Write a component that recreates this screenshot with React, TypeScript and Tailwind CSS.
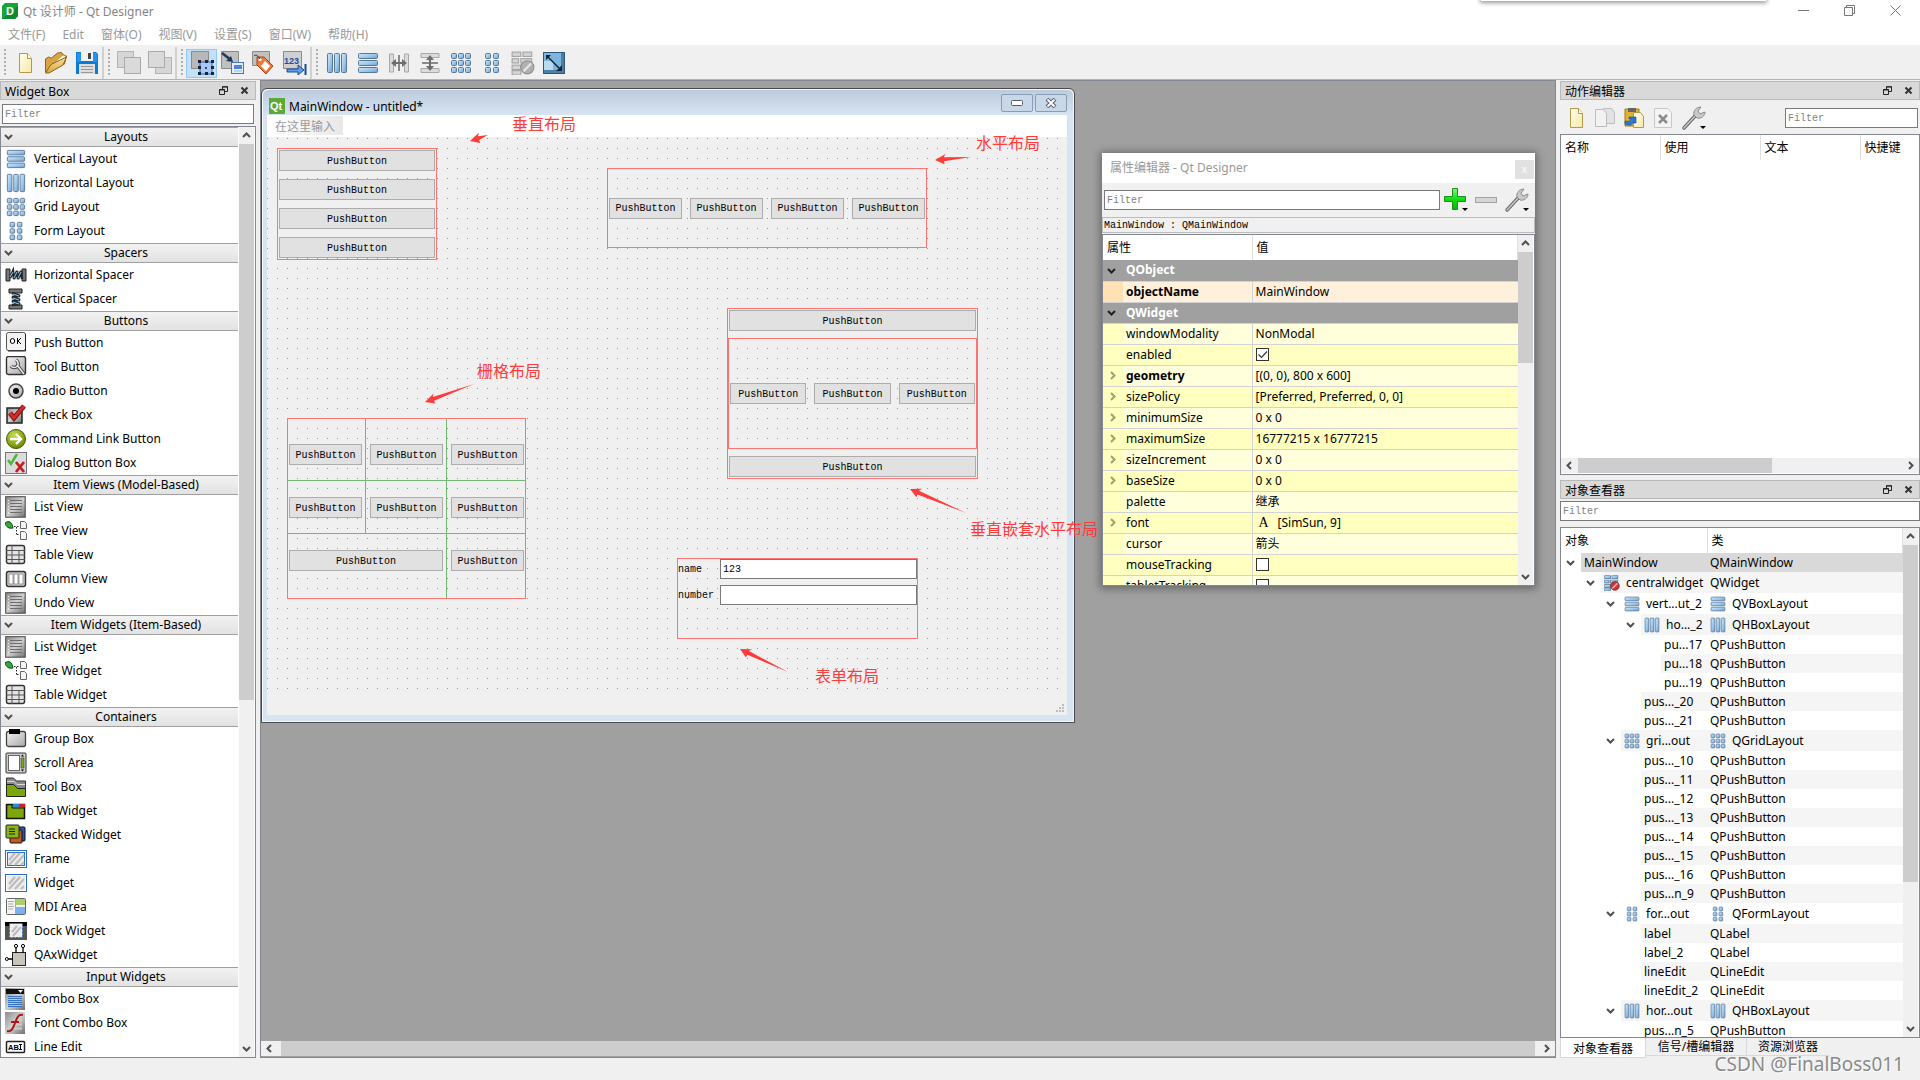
import React from "react";

type IconProps = { size?: number; muted?: boolean };

const ui = "font-['Noto_Sans','Noto_Sans_CJK_SC',sans-serif]";
const mono = "font-['Liberation_Mono','Noto_Sans_CJK_SC',monospace]";

/* ---------- shared gradients ---------- */
function Defs() {
  return (
    <svg className="absolute h-0 w-0" aria-hidden="true">
      <defs>
        <linearGradient id="blue" x1="0" y1="0" x2="1" y2="1">
          <stop offset="0" stopColor="#cfe8fb" />
          <stop offset="0.6" stopColor="#94c4ec" />
          <stop offset="1" stopColor="#7399bf" />
        </linearGradient>
        <linearGradient id="gray" x1="0" y1="0" x2="1" y2="1">
          <stop offset="0" stopColor="#f4f4f4" />
          <stop offset="1" stopColor="#a8a8a8" />
        </linearGradient>
        <linearGradient id="dark" x1="0" y1="0" x2="1" y2="1">
          <stop offset="0" stopColor="#8c8c8c" />
          <stop offset="0.5" stopColor="#d0d0d0" />
          <stop offset="1" stopColor="#6e6e6e" />
        </linearGradient>
        <linearGradient id="paper" x1="0" y1="0" x2="1" y2="1">
          <stop offset="0" stopColor="#fffdf0" />
          <stop offset="1" stopColor="#f7e9a4" />
        </linearGradient>
        <linearGradient id="folder" x1="0" y1="0" x2="0" y2="1">
          <stop offset="0" stopColor="#fbe49a" />
          <stop offset="1" stopColor="#dba63a" />
        </linearGradient>
        <linearGradient id="green" x1="0" y1="0" x2="0" y2="1">
          <stop offset="0" stopColor="#8bf08b" />
          <stop offset="0.5" stopColor="#10e010" />
          <stop offset="1" stopColor="#08b808" />
        </linearGradient>
        <radialGradient id="olive" cx="0.4" cy="0.3" r="0.7">
          <stop offset="0" stopColor="#c6dc4c" />
          <stop offset="1" stopColor="#6f8c00" />
        </radialGradient>
      </defs>
    </svg>
  );
}

function Svg({ size = 22, children, box = 22 }: { size?: number; box?: number; children: React.ReactNode }) {
  return (
    <svg width={size} height={size} viewBox={`0 0 ${box} ${box}`} className="shrink-0" aria-hidden="true">
      {children}
    </svg>
  );
}

/* ---------- layout icons ---------- */
type Cell = [number, number, number, number];
function Cells({ cells, size, muted }: IconProps & { cells: Cell[] }) {
  return (
    <Svg size={size}>
      {cells.map(([x, y, w, h], i) => (
        <rect key={i} x={x} y={y} width={w} height={h} rx="1" fill={muted ? "#dcdcdc" : "url(#blue)"} stroke={muted ? "#a4a4a4" : "#5b7796"} />
      ))}
    </Svg>
  );
}
const vCells: Cell[] = [[1.5, 1.5, 19, 5], [1.5, 8.5, 19, 5], [1.5, 15.5, 19, 5]];
const hCells: Cell[] = [[1.5, 1.5, 5, 19], [8.5, 1.5, 5, 19], [15.5, 1.5, 5, 19]];
const gCells: Cell[] = [1.5, 8.5, 15.5].flatMap((y) => [1.5, 8.5, 15.5].map((x) => [x, y, 5, 5] as Cell));
const fCells: Cell[] = [1.5, 8.5, 15.5].flatMap((y) => [4.5, 12.5].map((x) => [x, y, 5, 5] as Cell));
const VIcon = (p: IconProps) => <Cells cells={vCells} {...p} />;
const HIcon = (p: IconProps) => <Cells cells={hCells} {...p} />;
const GIcon = (p: IconProps) => <Cells cells={gCells} {...p} />;
const FIcon = (p: IconProps) => <Cells cells={fCells} {...p} />;

function BreakIcon({ size = 22, muted }: IconProps) {
  const f = muted ? "#d4d4d4" : "url(#blue)";
  const s = muted ? "#a4a4a4" : "#5b7796";
  return (
    <Svg size={size}>
      {[[1, 1, 8], [11, 1, 8], [1, 7, 6], [9, 7, 10], [1, 13, 8], [1, 18, 8]].map(([x, y, w], i) => (
        <rect key={i} x={x} y={y} width={w} height="4" fill={f} stroke={s} />
      ))}
      <circle cx="15" cy="15" r="6" fill={muted ? "#b0b0b0" : "#c9363a"} stroke={muted ? "#929292" : "#8c1f25"} />
      <path d="M11.5 18.5l7-7" stroke={muted ? "#e8e8e8" : "#eab8b8"} strokeWidth="2" />
    </Svg>
  );
}

/* ---------- toolbar icons ---------- */
const NewIcon = ({ size = 24, muted }: IconProps) => (
  <Svg size={size} box={24}>
    <path d="M6.500 2.500h8l4 5v14h-12z" fill={muted ? "#eee" : "url(#paper)"} stroke={muted ? "#c4c4c4" : "#b39a4a"} />
    <path d="M14.500 2.500v5h4" fill="#fff" stroke={muted ? "#c4c4c4" : "#b39a4a"} />
  </Svg>
);
const OpenIcon = () => (
  <Svg size={24} box={24}>
    <path d="M1.500 21V8l3-2 3 1 6-5 4-.5 2 2.500 3 1-2 8z" fill="#d9a441" stroke="#8a6420" />
    <path d="M6 15L19 4l3 1-5 8z" fill="#fff8dd" stroke="#a9853a" strokeWidth=".7" />
    <path d="M1.500 22L7 13.500 22.500 6 19 14 5 22z" fill="url(#folder)" stroke="#8a6420" />
  </Svg>
);
const SaveIcon = () => (
  <Svg size={24} box={24}>
    <path d="M1 1h20l2 2v20H1z" fill="#0d7bd6" />
    <path d="M2 2h4v9H2zM18 2h3l1 2v7h-4z" fill="#2495ee" />
    <path d="M6 1h12v9H6z" fill="#f2f2f2" /><path d="M13 2h3v6h-3z" fill="#444" />
    <path d="M4 13h16v10H4z" fill="#ddd" />
    <path d="M6 15.500h12M6 18.500h12M6 21.500h12" stroke="#9a9a9a" />
  </Svg>
);
const BackIcon = ({ front }: { front?: boolean }) => (
  <Svg size={24} box={24}>
    <rect x={front ? 7.5 : 0.5} y={front ? 6.5 : 0.5} width="16" height="16" fill="#d6d6d6" stroke="#b4b4b4" />
    <rect x={front ? 0.5 : 7.5} y={front ? 0.5 : 6.5} width="16" height="16" fill="#dadada" stroke="#aaa" />
  </Svg>
);
const WidgetsIcon = () => (
  <Svg size={26} box={26}>
    <rect x="2.500" y="1.500" width="17" height="17" fill="#b8b8b8" stroke="#8b8b8b" />
    <rect x="11" y="12" width="12" height="12" fill="#a9c8f5" stroke="#3d5f96" />
    {[[9, 10], [16, 10], [22, 10], [9, 16], [22, 16], [9, 22], [16, 22], [22, 22]].map(([x, y]) => (
      <rect key={`${x}-${y}`} x={x} y={y} width="3" height="3" fill="#15243c" />
    ))}
    <rect x="16" y="17" width="2" height="2" fill="#234a8a" />
  </Svg>
);
const SignalsIcon = () => (
  <Svg size={26} box={26}>
    <path d="M1.500 1.500h17v17h-17z" fill="#c0c0c0" stroke="#8b8b8b" />
    <path d="M2 3l9 7" stroke="#1b3a5c" strokeWidth="2.500" /><path d="M13 12l-7-1 5-5z" fill="#1b3a5c" />
    <rect x="11.500" y="12.500" width="12" height="11" fill="#e3ecfa" stroke="#4d77b4" />
    <rect x="14" y="15" width="8" height="4" fill="#4d86d8" /><path d="M14 21h8" stroke="#9cb6dc" />
  </Svg>
);
const BuddiesIcon = () => (
  <Svg size={26} box={26}>
    <path d="M1.500 1.500h17v14h-17z" fill="#c0c0c0" stroke="#8b8b8b" />
    <path d="M6 7h7l9 9-7 8-9-9z" fill="#f07a3c" stroke="#a8441c" />
    <path d="M14 11l5 5-4 5-5-5z" fill="#fff" />
    <circle cx="9" cy="9.500" r="1.500" fill="#fff" /><path d="M3 6c2-2 4 0 6 3" stroke="#333" fill="none" />
  </Svg>
);
const TabOrderIcon = () => (
  <Svg size={26} box={26}>
    <path d="M1.500 1.500h18v17h-18z" fill="#d0d0d0" stroke="#8b8b8b" />
    <text x="2" y="14" fontSize="9" fontWeight="700" fill="#17509a" fontFamily="Liberation Sans, sans-serif">123</text>
    <path d="M5 19h11v-4l6 5-6 5v-3H5z" fill="#5b9cf0" stroke="#1c4c90" /><path d="M23.500 14v11" stroke="#1c4c90" strokeWidth="2" />
  </Svg>
);
const HSplitIcon = () => (
  <Svg>
    <path d="M1.500 2h4v18h-4zM16.500 2h4v18h-4z" fill="#dcdcdc" stroke="#a8a8a8" />
    <path d="M11 3v16" stroke="#8a8a8a" strokeWidth="2" /><path d="M3 11l5-4v3h6V7l5 4-5 4v-3H8v3z" fill="#6e6e6e" />
  </Svg>
);
const VSplitIcon = () => (
  <Svg>
    <path d="M2 1.500h18v4H2zM2 16.500h18v4H2z" fill="#dcdcdc" stroke="#a8a8a8" />
    <path d="M3 11h16" stroke="#8a8a8a" strokeWidth="2" /><path d="M11 3l4 5h-3v6h3l-4 5-4-5h3V8H7z" fill="#6e6e6e" />
  </Svg>
);
const AdjustIcon = () => (
  <Svg size={24} box={24}>
    <path d="M1 1h22v22H1z" fill="#4c7ea6" /><path d="M2 2h17v17H2z" fill="#7eb5dc" /><path d="M2 10h9v9H2z" fill="#b8dbf2" />
    <path d="M1.500 1.500h21v21h-21z" fill="none" stroke="#2f5878" />
    <path d="M6 6l11 11" stroke="#0e2536" strokeWidth="1.500" /><path d="M4 4h5l-5 5zM20 20h-6l6-6z" fill="#0e2536" />
  </Svg>
);
const WrenchIcon = () => (
  <Svg size={26} box={26}>
    <path d="M3 23l12-13" stroke="#666" strokeWidth="3.500" strokeLinecap="round" />
    <path d="M3 23l12-13" stroke="#c9c9c9" strokeWidth="1.500" strokeLinecap="round" />
    <path d="M13 10c-1-4 2-8 7-8l-3 4 2 3 5-2c0 4-4 7-8 6z" fill="#c9c9c9" stroke="#8c8c8c" />
    <path d="M19 21h6l-3 3z" fill="#000" />
  </Svg>
);
const PlusIcon = () => (
  <Svg size={26} box={26}>
    <path d="M9.500 1.500h5v8h8v5h-8v8h-5v-8h-8v-5h8z" fill="url(#green)" stroke="#189018" />
    <path d="M19 21h6l-3 3z" fill="#000" />
  </Svg>
);
const MinusIcon = () => (
  <Svg size={24} box={24}><rect x="1.500" y="9.500" width="21" height="5" fill="#d6d6d6" stroke="#a2a2a2" /></Svg>
);
const CopyIcon = () => (
  <Svg size={22} box={22}>
    <path d="M9.500 1.500h8l3 4v11h-11z" fill="#e2e2e2" stroke="#bdbdbd" /><path d="M1.500 2.500h8l3 4v13h-11z" fill="#f2f2f2" stroke="#bdbdbd" />
  </Svg>
);
const PasteIcon = () => (
  <Svg size={22} box={22}>
    <path d="M2 2h14v17H2z" fill="#e2b32e" stroke="#a27a10" /><path d="M5 1h8v4H5z" fill="#666" />
    <path d="M10.500 5.500h7l3 4v11h-10z" fill="url(#paper)" stroke="#b39a4a" /><path d="M2 14c5 1 6-1 6-2H6l0-2h7v6h-2v-1c-2 3-5 4-9 2z" fill="#2a78dc" stroke="#124a9c" strokeWidth=".6" />
  </Svg>
);
const DeleteIcon = () => (
  <Svg size={22} box={22}>
    <path d="M2.500 1.500h13l4 4v15h-17z" fill="#f4f4f4" stroke="#c8c8c8" /><path d="M7 8l8 8M15 8l-8 8" stroke="#8c8c8c" strokeWidth="2.500" />
  </Svg>
);

/* ---------- widget box icons ---------- */
const HSpacer = () => (
  <Svg><path d="M1 5h4v12H1zM17 5h4v12h-4z" fill="#777" stroke="#222" /><path d="M5 14l3-7 1 8 3-8 1 8 3-8 1 8" stroke="#1c2a36" strokeWidth="2.500" fill="none" /><path d="M5 13l3-5M9 14l3-6M13 14l3-6" stroke="#9cc4dc" /></Svg>
);
const VSpacer = () => (
  <Svg><path d="M4 1h13v4H4zM4 17h13v4H4z" fill="#777" stroke="#222" /><path d="M7 5l8 3-8 1 8 3-8 1 8 3-8 1" stroke="#1c2a36" strokeWidth="2.500" fill="none" /><path d="M8 6l6 2M8 10l6 2M8 14l6 2" stroke="#9cc4dc" /></Svg>
);
const PushIcon = () => (
  <Svg><rect x="1.500" y=".5" width="19" height="18" rx="2" fill="#f2f2f2" stroke="#555" /><path d="M20.500 2v17H3" stroke="#222" fill="none" /><ellipse cx="7.500" cy="9" rx="2.200" ry="2.500" fill="none" stroke="#000" /><path d="M12.500 6v6M16 6l-3 3 3 3" stroke="#000" fill="none" /></Svg>
);
const ToolIcon = () => (
  <Svg><rect x="1.500" y=".5" width="19" height="18" rx="2" fill="url(#gray)" stroke="#333" strokeWidth="1.400" /><path d="M11 4a4 4 0 1 1-5 6M12 9l7 9" stroke="#444" strokeWidth="3.500" fill="none" /><path d="M11 4a4 4 0 1 1-5 6M12 9l7 9" stroke="#eee" strokeWidth="1.500" fill="none" /></Svg>
);
const RadioIcon = () => (
  <Svg><circle cx="11" cy="11" r="7" fill="url(#gray)" stroke="#444" strokeWidth="1.500" /><circle cx="11" cy="11" r="3" fill="#000" /></Svg>
);
const CheckIcon = () => (
  <Svg><path d="M2 4h15v15H2z" fill="url(#dark)" stroke="#222" strokeWidth="1.500" /><path d="M5 9l4 5L19 2" stroke="#7a1212" strokeWidth="5" fill="none" /><path d="M5 9l4 5L19 2" stroke="#d42a2a" strokeWidth="3" fill="none" /></Svg>
);
const LinkIcon = () => (
  <Svg><circle cx="11" cy="11" r="9.500" fill="url(#olive)" stroke="#44560a" /><path d="M5 11h10M11 6l5 5-5 5" stroke="#fff" strokeWidth="2.400" fill="none" /></Svg>
);
const DialogIcon = () => (
  <Svg><rect x=".5" y=".5" width="21" height="21" fill="#dcdcdc" stroke="#777" /><path d="M3 8l3 4 6-10" stroke="#4eb83c" strokeWidth="2.500" fill="none" /><path d="M11 10l8 10M19 10l-8 10" stroke="#c22020" strokeWidth="2.800" /></Svg>
);
const ListIcon = () => (
  <Svg><rect x=".7" y=".7" width="19.500" height="20.500" fill="url(#dark)" stroke="#444" /><path d="M5 4.500h12M5 7.500h12M5 10.500h12M5 13.500h12M5 16.500h12" stroke="#6e6e6e" /><path d="M3 4.500h1M3 7.500h1M3 10.500h1M3 13.500h1M3 16.500h1" stroke="#eee" /></Svg>
);
const TreeIcon = () => (
  <Svg><path d="M0 3c4-3 7-1 8 5-4 1-7-1-8-5z" fill="#35a83a" stroke="#0b4c12" /><path d="M9 6.500h6M11.500 7v8M12 14.500h4" stroke="#222" strokeDasharray="1.500 1.500" /><path d="M15.500 1.500h4l2 2v5h-6zM15.500 11.500h4l2 2v6h-6z" fill="#f4f4f4" stroke="#666" /></Svg>
);
const TableIcon = () => (
  <Svg><rect x="1.500" y="1.500" width="18" height="18" rx="2" fill="#e4e4e4" stroke="#333" strokeWidth="1.500" /><path d="M1 6.500h19M1 11h19M1 15.500h19M7 1v19M14 6v13" stroke="#555" /></Svg>
);
const ColumnIcon = () => (
  <Svg><rect x="1.500" y="3.500" width="19" height="15" rx="2" fill="#ccc" stroke="#333" strokeWidth="1.500" /><path d="M4 6h4v10H4zM9 6h4v10H9zM14 6h4v10h-4z" fill="#fff" stroke="#777" strokeWidth=".7" /></Svg>
);
const GroupIcon = () => (
  <Svg><rect x="1.500" y="3.500" width="19" height="15" rx="2" fill="url(#gray)" stroke="#444" strokeWidth="1.300" /><path d="M4 1h11v5H4z" fill="#000" /></Svg>
);
const ScrollIcon = () => (
  <Svg><rect x="1" y="1" width="20" height="20" rx="1" fill="#ccc" stroke="#333" /><rect x="3.500" y="3.500" width="11" height="15" fill="#fff" stroke="#666" /><path d="M16 6h3v10h-3z" fill="#7ba808" stroke="#345" strokeWidth=".6" /><path d="M16 4.500l1.500-2 1.500 2zM16 17.500l1.500 2 1.500-2z" fill="#000" /></Svg>
);
const ToolBoxIcon = () => (
  <Svg><path d="M1.500 2h7l3 3h9v8h-8l-4-4h-7z" fill="#8a8a8a" stroke="#333" /><path d="M2 5.500h7l3 3h8" stroke="#ddd" fill="none" /><path d="M1.500 8.500h7l4 4h8v8h-19z" fill="#7ba808" stroke="#222" /></Svg>
);
const TabIcon = () => (
  <Svg><path d="M1.500 4.500h18v14h-18z" fill="#7ba808" stroke="#111" strokeWidth="1.500" /><path d="M8 4h6v3H8z" fill="#2a8ae0" /><path d="M14 4h6v3h-6z" fill="#d42020" /><path d="M7 4v4h13" stroke="#111" fill="none" /></Svg>
);
const StackIcon = () => (
  <Svg><rect x="9" y="3" width="11" height="14" rx="1" fill="#2456b0" stroke="#111" /><rect x="5" y="6" width="12" height="13" rx="1" fill="#c85a1c" stroke="#111" /><rect x="1" y="1" width="13" height="13" rx="1" fill="#8cb414" stroke="#223" /><path d="M4 5h6M4 7.500h6M4 10h6" stroke="#123" /></Svg>
);
const FrameIcon = ({ inner }: { inner?: boolean }) => (
  <Svg>
    <rect x=".5" y="2.500" width="21" height="17" fill="#fff" stroke="#2a6cc4" />
    <rect x="2.500" y="4.500" width="17" height="13" fill="#ececec" stroke={inner ? "#2a6cc4" : "#ececec"} />
    <path d="M4 12l6-7M4 17L15 5M10 17l9-10M16 17l3-3" stroke="#bbb" strokeWidth="2" />
  </Svg>
);
const MdiIcon = () => (
  <Svg><rect x="1.500" y="2.500" width="19" height="16" rx="1" fill="#f4f4f4" stroke="#666" /><path d="M11 3h9v6h-9z" fill="#a9d06a" /><path d="M11 11h9v7h-9z" fill="#7db0ee" /><path d="M3 5.500h6M3 8h5M3 10.500h6M3 13h5M10.500 3v15M11 13.500h9M14.500 11v7" stroke="#aaa" /></Svg>
);
const DockIcon = () => (
  <Svg><path d="M0 2h22v18H0z" fill="#555" /><path d="M0 2h22v4H0z" fill="#000" /><rect x="4.500" y="3.500" width="13" height="14" fill="#eee" stroke="#2a6cc4" strokeDasharray="2 1.500" /><path d="M7 12l5-6M8 16l8-9" stroke="#bbb" strokeWidth="2" /></Svg>
);
const AxIcon = () => (
  <Svg><rect x="7.500" y="8.500" width="13" height="13" fill="#c8c4bc" stroke="#222" /><path d="M11 3v6M18 3v6M3 15h5" stroke="#000" strokeWidth="1.300" /><circle cx="11" cy="2" r="1.600" fill="#fff" stroke="#000" /><circle cx="18" cy="2" r="1.600" fill="#fff" stroke="#000" /><circle cx="1.800" cy="15" r="1.500" fill="#fff" stroke="#000" /></Svg>
);
const ComboIcon = () => (
  <Svg><path d="M0 0h20v22H0z" fill="url(#dark)" /><path d="M1 1h18v5H1z" fill="#111" /><path d="M13 2h5l-2.500 3z" fill="#fff" /><path d="M3 9.500h14M3 13.500h14M3 17.500h14" stroke="#3a76c0" strokeWidth="3" /><path d="M3 9.500h14M3 13.500h14M3 17.500h14" stroke="#8fc0f2" /></Svg>
);
const FontComboIcon = () => (
  <Svg><path d="M0 0h20v22H0z" fill="url(#dark)" /><path d="M9 8.500h8M9 12.500h8M9 16.500h8" stroke="#ccc" strokeWidth="2" /><path d="M18 3c-5-1-6 3-8 8s-3 9-8 8M6 10h8" stroke="#b01414" strokeWidth="2" fill="none" /></Svg>
);
const LineEditIcon = () => (
  <Svg><rect x="1.500" y="5.500" width="18" height="11" rx="1" fill="#fff" stroke="#222" strokeWidth="1.500" /><text x="3" y="14" fontSize="7.500" fontWeight="700" fontFamily="Liberation Sans, sans-serif">AB</text><path d="M14 8.500h3M15.500 8.500v5M14 13.500h3" stroke="#000" /></Svg>
);

/* ---------- small controls ---------- */
const chevronPaths = { up: "M2 7l3.500-3.500L9 7", down: "M2 4l3.500 3.500L9 4", left: "M7 2L3.500 5.500 7 9", right: "M4 2l3.500 3.500L4 9" };
function Chevron({ dir, color = "#505050" }: { dir: keyof typeof chevronPaths; color?: string }) {
  return (
    <svg width="11" height="11" viewBox="0 0 11 11" className="shrink-0" aria-hidden="true">
      <path d={chevronPaths[dir]} fill="none" stroke={color} strokeWidth="2" />
    </svg>
  );
}
function VScroll({ thumb }: { thumb: string }) {
  return (
    <div className="mr-px flex w-[15px] shrink-0 flex-col bg-[#f0f0f0]">
      <button aria-label="Scroll up" className="flex h-[17px] shrink-0 items-center justify-center"><Chevron dir="up" /></button>
      <div className="min-h-0 flex-1"><div className={`bg-[#cdcdcd] ${thumb}`} /></div>
      <button aria-label="Scroll down" className="flex h-[17px] shrink-0 items-center justify-center"><Chevron dir="down" /></button>
    </div>
  );
}
function HScroll({ thumb }: { thumb: string }) {
  return (
    <div className="mb-px flex h-[15px] shrink-0 bg-[#f0f0f0]">
      <button aria-label="Scroll left" className="flex w-[17px] shrink-0 items-center justify-center"><Chevron dir="left" /></button>
      <div className="flex min-w-0 flex-1"><div className={`bg-[#cdcdcd] ${thumb}`} /></div>
      <button aria-label="Scroll right" className="flex w-[17px] shrink-0 items-center justify-center"><Chevron dir="right" /></button>
    </div>
  );
}
function DockTitle({ title }: { title: string }) {
  return (
    <div className="flex h-[19px] shrink-0 items-center border border-[#b9b9b9] bg-[#d9d9d9] pl-1">
      <h2 className="flex-1 whitespace-nowrap pt-[2px]">{title}</h2>
      <button aria-label="Float" className="flex w-[21px] justify-center">
        <svg width="9" height="9" viewBox="0 0 9 9"><path d="M3.500 3V.7h5v4.800H6M.5 3.500h5v5h-5zM3 1h6M0 4h6" fill="none" stroke="#222" /></svg>
      </button>
      <button aria-label="Close" className="flex w-[21px] justify-center">
        <svg width="9" height="9" viewBox="0 0 9 9"><path d="M1.500 1.500l6 6M7.500 1.500l-6 6" stroke="#333" strokeWidth="2" /></svg>
      </button>
    </div>
  );
}
function Filter({ className = "" }: { className?: string }) {
  return (
    <input aria-label="Filter" placeholder="Filter" className={`h-5 min-w-0 shrink-0 border border-[#7a7a7a] bg-white px-[2px] text-[10px] placeholder:text-[#7f7f7f] ${mono} ${className}`} />
  );
}

/* ---------- widget box ---------- */
type WidgetItem = [string, () => React.ReactElement];
const categories: { name: string; items: WidgetItem[] }[] = [
  { name: "Layouts", items: [["Vertical Layout", () => <VIcon size={20} />], ["Horizontal Layout", () => <HIcon size={20} />], ["Grid Layout", () => <GIcon size={20} />], ["Form Layout", () => <FIcon size={20} />]] },
  { name: "Spacers", items: [["Horizontal Spacer", HSpacer], ["Vertical Spacer", VSpacer]] },
  { name: "Buttons", items: [["Push Button", PushIcon], ["Tool Button", ToolIcon], ["Radio Button", RadioIcon], ["Check Box", CheckIcon], ["Command Link Button", LinkIcon], ["Dialog Button Box", DialogIcon]] },
  { name: "Item Views (Model-Based)", items: [["List View", ListIcon], ["Tree View", TreeIcon], ["Table View", TableIcon], ["Column View", ColumnIcon], ["Undo View", ListIcon]] },
  { name: "Item Widgets (Item-Based)", items: [["List Widget", ListIcon], ["Tree Widget", TreeIcon], ["Table Widget", TableIcon]] },
  { name: "Containers", items: [["Group Box", GroupIcon], ["Scroll Area", ScrollIcon], ["Tool Box", ToolBoxIcon], ["Tab Widget", TabIcon], ["Stacked Widget", StackIcon], ["Frame", () => <FrameIcon inner />], ["Widget", () => <FrameIcon />], ["MDI Area", MdiIcon], ["Dock Widget", DockIcon], ["QAxWidget", AxIcon]] },
  { name: "Input Widgets", items: [["Combo Box", ComboIcon], ["Font Combo Box", FontComboIcon], ["Line Edit", LineEditIcon]] },
];

function WidgetBox() {
  return (
    <aside className="mr-1 flex w-64 shrink-0 flex-col pt-px">
      <DockTitle title="Widget Box" />
      <Filter className="mx-[2px] mt-1" />
      <div className="mt-[2px] flex min-h-0 flex-1 border border-[#828790] bg-white">
        <div className="min-w-0 flex-1 overflow-hidden">
          {categories.map((c) => (
            <section key={c.name}>
              <h3 className="mr-px flex h-5 items-center border-b border-t border-[#a0a0a0] bg-linear-to-b from-[#f2f2f2] to-[#e2e2e2] pl-[2px]">
                <span className="pb-[2px]"><Chevron dir="down" /></span>
                <span className="flex-1 text-center">{c.name}</span>
              </h3>
              <ul>
                {c.items.map(([label, Icon]) => (
                  <li key={label} className="flex h-6 items-center gap-2 pl-[5px]">
                    <span className="flex w-5 justify-center pb-px"><Icon /></span>
                    <span>{label}</span>
                  </li>
                ))}
              </ul>
            </section>
          ))}
        </div>
        <VScroll thumb="h-[62%]" />
      </div>
    </aside>
  );
}

/* ---------- form canvas ---------- */
function Push({ className = "" }: { className?: string }) {
  return <button className={`h-[21px] border border-[#adadad] bg-[#e1e1e1] pt-[2px] text-[10px] leading-none ${className}`}>PushButton</button>;
}

function FormWindow() {
  return (
    <section className="absolute left-0 top-[7px] flex w-[814px] flex-col rounded-t-md border border-[#4a4a4a] bg-[#d7e4f2] pb-[7px] pl-[5px] pr-[7px] shadow-[inset_0_0_0_1px_#f4f8fc]">
      <header className="-ml-1 -mr-[6px] mt-px flex h-[25px] items-center rounded-t-md bg-linear-to-b from-[#bccbdb] to-[#d7e4f2] pl-[6px] pr-[6px]">
        <svg width="16" height="16" viewBox="0 0 16 16" className="mt-[7px]"><path d="M0 0h16v16H0z" fill="#5caa35" /><text x="1" y="12" fontSize="11" fontWeight="700" fill="#fff" fontFamily="Liberation Sans, sans-serif">Qt</text></svg>
        <h1 className="flex-1 pl-1 pt-2">MainWindow - untitled*</h1>
        <div className="flex gap-[2px]">
          <button aria-label="Minimize" className="flex h-[18px] w-8 items-center justify-center rounded-xs border border-[#8a9bb5] bg-[#c9d8e8]">
            <svg width="12" height="6" viewBox="0 0 12 6"><rect x=".5" y=".5" width="11" height="5" rx="1" fill="#fff" stroke="#555b6e" /></svg>
          </button>
          <button aria-label="Close form" className="flex h-[18px] w-8 items-center justify-center rounded-xs border border-[#8a9bb5] bg-[#c9d8e8]">
            <svg width="12" height="10" viewBox="0 0 12 10"><path d="M2 1l8 8M10 1L2 9" stroke="#555b6e" strokeWidth="4" /><path d="M2.500 1.500l7 7M9.500 1.500l-7 7" stroke="#fff" strokeWidth="2" /></svg>
          </button>
        </div>
      </header>
      <div className="h-[22px] bg-white pt-px">
        <button className="flex h-[19px] w-[76px] items-end justify-center bg-linear-to-r from-white to-[#e8e8e8] text-[#9a9a9a]">在这里输入</button>
      </div>
      <div className={`relative h-[578px] bg-[#f0f0f0] ${mono}`}>
        <div className="h-[555px] bg-[conic-gradient(from_270deg_at_1px_1px,#969696_90deg,transparent_0)] bg-[length:10px_10px] bg-[position:0_1px]" />

        <div className="absolute left-[10px] top-[11px] flex w-40 flex-col gap-2 border border-[#ff7373] p-px">
          <Push /><Push /><Push /><Push />
        </div>

        <div className="absolute left-[340px] top-[31px] flex h-20 w-80 items-center gap-2 border border-[#ff7373] px-px">
          <Push className="flex-1" /><Push className="flex-1" /><Push className="flex-1" /><Push className="flex-1" />
        </div>

        <div className="absolute left-[460px] top-[171px] flex h-[171px] w-[251px] flex-col gap-[7px] border border-[#ff7373] py-px">
          <Push className="mx-px" />
          <div className="flex flex-1 items-center gap-2 border border-[#ff7373] px-px">
            <Push className="flex-1" /><Push className="flex-1" /><Push className="flex-1" />
          </div>
          <Push className="mx-px" />
        </div>

        <div className="absolute left-5 top-[281px] grid h-[181px] w-[239px] grid-cols-[78px_81px_1fr] grid-rows-[62px_53px_1fr] border border-[#ff7373]">
          <div className="border-b border-r border-[#73b973] pl-px pt-[25px]"><Push className="w-[73px]" /></div>
          <div className="border-b border-r border-[#73b973] pl-1 pt-[25px]"><Push className="w-[73px]" /></div>
          <div className="border-b border-[#73b973] pl-1 pt-[25px]"><Push className="w-[73px]" /></div>
          <div className="border-b border-r border-[#73b973] pl-px pt-4"><Push className="w-[73px]" /></div>
          <div className="border-b border-r border-[#73b973] pl-1 pt-4"><Push className="w-[73px]" /></div>
          <div className="border-b border-[#73b973] pl-1 pt-4"><Push className="w-[73px]" /></div>
          <div className="col-span-2 border-r border-[#73b973] pl-px pt-4"><Push className="w-[154px]" /></div>
          <div className="pl-1 pt-4"><Push className="w-[73px]" /></div>
        </div>

        <div className="absolute left-[410px] top-[421px] grid h-[81px] w-[241px] grid-cols-[42px_197px] content-start items-center gap-y-[6px] border border-[#ff7373] text-[10px]">
          <label htmlFor="lineEdit" className="pt-[2px]">name</label>
          <input id="lineEdit" defaultValue="123" className="h-5 border border-[#7a7a7a] bg-white px-[2px]" />
          <label htmlFor="lineEdit_2" className="pt-[2px]">number</label>
          <input id="lineEdit_2" className="h-5 border border-[#7a7a7a] bg-white px-[2px]" />
        </div>

        <svg width="9" height="9" viewBox="0 0 9 9" className="absolute bottom-[2px] right-[3px]"><path d="M7 0h2v2H7zM4 3h2v2H4zM7 3h2v2H7zM1 6h2v2H1zM4 6h2v2H4zM7 6h2v2H7z" fill="#bdbdbd" /></svg>
      </div>
    </section>
  );
}

/* ---------- notes over the workspace ---------- */
const arrows: [number, number, number, number][] = [
  [209, 60, 227, 54],
  [674, 79, 710, 76],
  [164, 321, 213, 303],
  [649, 408, 705, 432],
  [479, 568, 527, 591],
];
function arrowPoints([tx, ty, sx, sy]: [number, number, number, number]) {
  const len = Math.hypot(tx - sx, ty - sy);
  const ux = (tx - sx) / len;
  const uy = (ty - sy) / len;
  const at = (back: number, side: number) => `${tx - ux * back - uy * side},${ty - uy * back + ux * side}`;
  return [`${sx},${sy}`, at(9, 2), at(11, 5), `${tx},${ty}`, at(9, -5), at(9, -2)].join(" ");
}
const note = "absolute whitespace-nowrap text-base leading-6 text-[#ff3c3c]";

function Notes() {
  return (
    <div className="pointer-events-none absolute inset-0">
      <svg className="absolute inset-0 h-full w-full" aria-hidden="true">
        {arrows.map((a) => <polygon key={a.join()} points={arrowPoints(a)} fill="#ff3c3c" />)}
      </svg>
      <span className={`${note} left-[251px] top-[31px]`}>垂直布局</span>
      <span className={`${note} left-[715px] top-[50px]`}>水平布局</span>
      <span className={`${note} left-[216px] top-[278px]`}>栅格布局</span>
      <span className={`${note} left-[709px] top-[436px]`}>垂直嵌套水平布局</span>
      <span className={`${note} left-[554px] top-[583px]`}>表单布局</span>
    </div>
  );
}

/* ---------- property editor ---------- */
type Prop = { name: string; value?: string; kind?: "group" | "check"; checked?: boolean; bold?: boolean; tree?: boolean; tone: string; edge: string; font?: boolean };
const light = { tone: "bg-[#ffffdc]", edge: "bg-[#ffffbf]" };
const deep = { tone: "bg-[#ffffbf]", edge: "bg-[#ffffbf]" };
const peach = { tone: "bg-[#fff0dc]", edge: "bg-[#ffe1b5]" };
const props: Prop[] = [
  { name: "QObject", kind: "group", ...light },
  { name: "objectName", value: "MainWindow", bold: true, ...peach },
  { name: "QWidget", kind: "group", ...light },
  { name: "windowModality", value: "NonModal", ...light },
  { name: "enabled", kind: "check", checked: true, ...deep },
  { name: "geometry", value: "[(0, 0), 800 x 600]", bold: true, tree: true, ...light },
  { name: "sizePolicy", value: "[Preferred, Preferred, 0, 0]", tree: true, ...deep },
  { name: "minimumSize", value: "0 x 0", tree: true, ...light },
  { name: "maximumSize", value: "16777215 x 16777215", tree: true, ...deep },
  { name: "sizeIncrement", value: "0 x 0", tree: true, ...light },
  { name: "baseSize", value: "0 x 0", tree: true, ...deep },
  { name: "palette", value: "继承", ...light },
  { name: "font", value: "[SimSun, 9]", tree: true, font: true, ...deep },
  { name: "cursor", value: "箭头", ...light },
  { name: "mouseTracking", kind: "check", ...deep },
  { name: "tabletTracking", kind: "check", ...light },
];

function PropertyEditor() {
  return (
    <section className="absolute left-[841px] top-[72px] flex h-[433px] w-[433px] flex-col bg-[#f0f0f0] shadow-[0_1px_8px_2px_rgba(0,0,0,0.35)]">
      <header className="flex h-[30px] shrink-0 items-center justify-between bg-white pl-2 pr-px">
        <h2 className="text-[#999]">属性编辑器 - Qt Designer</h2>
        <button aria-label="Close" className="mt-[2px] h-[19px] w-[19px] bg-[#e1e1e1] text-[10px] leading-none text-white">x</button>
      </header>
      <div className="flex h-[34px] shrink-0 items-center pl-[2px]">
        <Filter className="flex-1" />
        <button aria-label="Add property" className="ml-[3px] w-[31px]"><PlusIcon /></button>
        <button aria-label="Remove property" className="w-[30px]"><MinusIcon /></button>
        <button aria-label="Configure" className="w-[31px]"><WrenchIcon /></button>
      </div>
      <p className={`h-4 shrink-0 border border-[#bcbcbc] pl-px text-[10px] leading-4 ${mono}`}>MainWindow : QMainWindow</p>
      <div className="mt-px flex min-h-0 flex-1 border border-[#828790] bg-white">
        <div className="min-w-0 flex-1 overflow-hidden">
          <table className="w-full table-fixed border-collapse">
            <colgroup><col className="w-5" /><col className="w-[129px]" /><col /></colgroup>
            <thead>
              <tr className="h-[25px] text-left">
                <th colSpan={2} className="border-r border-[#e0e0e0] p-0 pl-1 font-normal">属性</th>
                <th className="border-r border-[#e0e0e0] p-0 pl-1 font-normal">值</th>
              </tr>
            </thead>
            <tbody>
              {props.map((p) => p.kind === "group" ? (
                <tr key={p.name} className="h-[21px] bg-[#a0a0a0] font-bold text-white">
                  <td className="p-0 pl-[3px]"><Chevron dir="down" color="#222" /></td>
                  <td colSpan={2} className="p-0 pl-[3px]">{p.name}</td>
                </tr>
              ) : (
                <tr key={p.name} className={`h-[21px] border-y border-[#d2d2d2] ${p.tone}`}>
                  <td className={`p-0 pl-1 ${p.edge}`}>{p.tree && <Chevron dir="right" color="#a0a070" />}</td>
                  <td className={`border-r border-[#d2d2d2] p-0 pl-[3px] ${p.bold ? "font-bold" : ""}`}>{p.name}</td>
                  <td className="p-0 pl-[3px]">
                    {p.kind === "check" ? (
                      <span className="relative flex h-[13px] w-[13px]">
                        <input type="checkbox" aria-label={p.name} defaultChecked={p.checked} className="peer h-[13px] w-[13px] appearance-none border border-[#333] bg-white" />
                        <svg viewBox="0 0 13 13" className="pointer-events-none absolute inset-0 hidden peer-checked:block"><path d="M2.500 6.500l3 3 5.500-6" fill="none" stroke="#333" strokeWidth="1.200" /></svg>
                      </span>
                    ) : (
                      <span className="flex items-center">
                        {p.font && <span className="w-[22px] pl-[3px] font-['Liberation_Serif',serif] text-sm leading-4">A</span>}
                        {p.value}
                      </span>
                    )}
                  </td>
                </tr>
              ))}
            </tbody>
          </table>
        </div>
        <VScroll thumb="h-[35%]" />
      </div>
    </section>
  );
}

/* ---------- object inspector ---------- */
type Kind = "v" | "h" | "g" | "f" | "b";
type Node = { level: number; name: string; cls: string; icon?: Kind; clsIcon?: Kind; open?: boolean };
const push = (level: number, name: string): Node => ({ level, name, cls: "QPushButton" });
const nodes: Node[] = [
  { level: 0, name: "MainWindow", cls: "QMainWindow", open: true },
  { level: 1, name: "centralwidget", cls: "QWidget", icon: "b", open: true },
  { level: 2, name: "vert...ut_2", cls: "QVBoxLayout", icon: "v", clsIcon: "v", open: true },
  { level: 3, name: "ho..._2", cls: "QHBoxLayout", icon: "h", clsIcon: "h", open: true },
  push(4, "pu...17"), push(4, "pu...18"), push(4, "pu...19"),
  push(3, "pus..._20"), push(3, "pus..._21"),
  { level: 2, name: "gri...out", cls: "QGridLayout", icon: "g", clsIcon: "g", open: true },
  push(3, "pus..._10"), push(3, "pus..._11"), push(3, "pus..._12"), push(3, "pus..._13"),
  push(3, "pus..._14"), push(3, "pus..._15"), push(3, "pus..._16"), push(3, "pus...n_9"),
  { level: 2, name: "for...out", cls: "QFormLayout", icon: "f", clsIcon: "f", open: true },
  { level: 3, name: "label", cls: "QLabel" },
  { level: 3, name: "label_2", cls: "QLabel" },
  { level: 3, name: "lineEdit", cls: "QLineEdit" },
  { level: 3, name: "lineEdit_2", cls: "QLineEdit" },
  { level: 2, name: "hor...out", cls: "QHBoxLayout", icon: "h", clsIcon: "h", open: true },
  push(3, "pus...n_5"),
];
const indents = ["pl-0", "pl-5", "pl-10", "pl-15", "pl-20"];
function KindIcon({ kind }: { kind: Kind }) {
  if (kind === "v") return <VIcon size={16} />;
  if (kind === "h") return <HIcon size={16} />;
  if (kind === "g") return <GIcon size={16} />;
  if (kind === "f") return <FIcon size={16} />;
  return <BreakIcon size={16} />;
}

function RightDocks() {
  return (
    <aside className="ml-1 flex w-[360px] shrink-0 flex-col pt-px">
      <DockTitle title="动作编辑器" />
      <div className="flex h-[34px] shrink-0 items-center pl-1 pr-[2px] pt-[2px]">
        <button aria-label="New action" className="w-[30px]"><NewIcon size={24} /></button>
        <button aria-label="Copy" className="w-[29px]"><CopyIcon /></button>
        <button aria-label="Paste" className="w-[29px]"><PasteIcon /></button>
        <button aria-label="Delete" className="w-[29px]"><DeleteIcon /></button>
        <button aria-label="Configure" className="w-[30px]"><WrenchIcon /></button>
        <Filter className="ml-auto w-[133px]" />
      </div>
      <div className="flex min-h-0 flex-[2] flex-col border border-[#828790] bg-white">
        <div className="min-h-0 flex-1 overflow-hidden">
          <table className="w-full table-fixed border-collapse">
            <thead>
              <tr className="h-[25px] text-left">
                <th className="w-[99px] border-r border-[#e0e0e0] p-0 pl-1 font-normal">名称</th>
                <th className="w-[100px] border-r border-[#e0e0e0] p-0 pl-1 font-normal">使用</th>
                <th className="w-[100px] border-r border-[#e0e0e0] p-0 pl-1 font-normal">文本</th>
                <th className="p-0 pl-1 font-normal">快捷键</th>
              </tr>
            </thead>
          </table>
        </div>
        <HScroll thumb="w-[60%]" />
      </div>
      <div className="mt-[5px]"><DockTitle title="对象查看器" /></div>
      <Filter className="mt-[2px]" />
      <div className="mt-[6px] flex min-h-0 flex-[3] border border-[#828790] bg-white">
        <div className="min-w-0 flex-1 overflow-hidden">
          <table className="w-full table-fixed border-collapse">
            <thead>
              <tr className="h-[25px] text-left">
                <th className="w-[146px] border-r border-[#e0e0e0] p-0 pl-1 font-normal">对象</th>
                <th className="border-r border-[#e0e0e0] p-0 pl-1 font-normal">类</th>
              </tr>
            </thead>
            <tbody>
              {nodes.map((n, i) => {
                const h = n.icon ? "h-[21px]" : "h-[19px]";
                const bg = i === 0 ? "bg-[#d9d9d9]" : i % 2 ? "bg-[#f5f5f5]" : "bg-white";
                return (
                  <tr key={n.name + i}>
                    <td className="p-0">
                      <div className={`flex ${h} ${indents[n.level]}`}>
                        <span className="flex w-5 shrink-0 items-center justify-center pr-px">{n.open && <Chevron dir="down" />}</span>
                        <span className={`flex flex-1 items-center whitespace-nowrap pl-[3px] ${bg}`}>
                          {n.icon && <span className="mr-[6px]"><KindIcon kind={n.icon} /></span>}
                          {n.name}
                        </span>
                      </div>
                    </td>
                    <td className="p-0">
                      <div className={`flex items-center pl-[3px] ${h} ${bg}`}>
                        {n.clsIcon && <span className="mr-[6px]"><KindIcon kind={n.clsIcon} /></span>}
                        {n.cls}
                      </div>
                    </td>
                  </tr>
                );
              })}
            </tbody>
          </table>
        </div>
        <VScroll thumb="h-[71%]" />
      </div>
      <div className="flex h-5 shrink-0" role="tablist">
        <button role="tab" aria-selected="true" className="w-[86px] border border-t-0 border-[#d9d9d9] bg-white pt-[2px] text-center">对象查看器</button>
        <button role="tab" aria-selected="false" className="mb-[2px] w-[101px] border-b border-r border-[#d9d9d9] text-center">信号/槽编辑器</button>
        <button role="tab" aria-selected="false" className="mb-[2px] w-[82px] border-b border-[#d9d9d9] text-center">资源浏览器</button>
      </div>
    </aside>
  );
}

/* ---------- toolbar ---------- */
const groups: { label: string; icon: React.ReactElement; on?: boolean }[][] = [
  [{ label: "New", icon: <NewIcon /> }, { label: "Open", icon: <OpenIcon /> }, { label: "Save", icon: <SaveIcon /> }],
  [{ label: "Send to back", icon: <BackIcon /> }, { label: "Bring to front", icon: <BackIcon front /> }],
  [{ label: "Edit widgets", icon: <WidgetsIcon />, on: true }, { label: "Edit signals", icon: <SignalsIcon /> }, { label: "Edit buddies", icon: <BuddiesIcon /> }, { label: "Edit tab order", icon: <TabOrderIcon /> }],
  [{ label: "Lay out horizontally", icon: <HIcon /> }, { label: "Lay out vertically", icon: <VIcon /> }, { label: "Horizontal splitter", icon: <HSplitIcon /> }, { label: "Vertical splitter", icon: <VSplitIcon /> }, { label: "Grid", icon: <GIcon /> }, { label: "Form", icon: <FIcon /> }, { label: "Break layout", icon: <BreakIcon size={24} muted /> }, { label: "Adjust size", icon: <AdjustIcon /> }],
];

export default function App() {
  return (
    <div className={`relative flex h-screen flex-col overflow-hidden bg-[#f0f0f0] text-xs text-black ${ui}`}>
      <Defs />
      <header className="flex h-[22px] shrink-0 items-center bg-white pl-[2px] pr-[2px] text-[#858585]">
        <svg width="16" height="16" viewBox="0 0 16 16"><path d="M3 0h13v13l-3 3H0V3z" fill="#17a53a" /><path d="M0 16L16 3v10l-3 3z" fill="#0e8a2d" /><text x="4" y="12" fontSize="11" fontWeight="700" fill="#fff" fontFamily="Liberation Sans, sans-serif">D</text></svg>
        <span className="flex-1 pl-[5px] pt-[2px]">Qt 设计师 - Qt Designer</span>
        <div className="flex pb-[2px]">
          <button aria-label="Minimize" className="flex w-[46px] justify-center"><svg width="11" height="11"><path d="M0 5.500h11" stroke="#777" /></svg></button>
          <button aria-label="Restore" className="flex w-[46px] justify-center"><svg width="11" height="11" fill="none" stroke="#777"><path d="M.5 2.500h8v8h-8zM2.500 2V.5h8v8H9" /></svg></button>
          <button aria-label="Close" className="flex w-[46px] justify-center"><svg width="11" height="11"><path d="M.5 .5l10 10M10.500 .5l-10 10" stroke="#777" /></svg></button>
        </div>
      </header>
      <div className="absolute left-[1481px] top-[-4px] h-[5px] w-[285px] bg-white shadow-[0_1px_4px_1px_rgba(0,0,0,0.4)]" />
      <nav className="flex h-[23px] shrink-0 items-center gap-px bg-white pt-[2px] text-[#999]">
        {["文件(F)", "Edit", "窗体(O)", "视图(V)", "设置(S)", "窗口(W)", "帮助(H)"].map((m) => <button key={m} className="px-2">{m}</button>)}
      </nav>
      <div className="flex h-[35px] shrink-0 items-stretch border-b border-[#b4b4b4] pt-[2px]" role="toolbar">
        {groups.map((g, i) => (
          <div key={i} className={`flex items-center ${i < groups.length - 1 ? "border-r-2 border-[#d0d0d0]" : ""}`}>
            <span className="ml-1 mr-[3px] h-7 w-[2px] bg-[linear-gradient(#b0b0b0_50%,transparent_50%)] bg-[length:2px_4px]" />
            {g.map((b) => (
              <button key={b.label} aria-label={b.label} className={`flex h-[29px] w-[31px] items-center justify-center ${b.on ? "border border-[#90c8f6] bg-[#c2e0f7]" : ""}`}>{b.icon}</button>
            ))}
          </div>
        ))}
      </div>
      <div className="flex min-h-0 flex-1 pb-[22px]">
        <WidgetBox />
        <main className="flex min-w-0 flex-1 flex-col border border-[#828790] bg-[#a0a0a0]">
          <div className="relative min-h-0 flex-1">
            <FormWindow />
            <Notes />
            <PropertyEditor />
          </div>
          <HScroll thumb="mx-[3px] flex-1" />
        </main>
        <RightDocks />
      </div>
      <p className="absolute bottom-[4px] right-4 text-[19px] leading-6 text-[#8a8a8a] [text-shadow:1px_1px_1px_#fff]">CSDN @FinalBoss011</p>
    </div>
  );
}
